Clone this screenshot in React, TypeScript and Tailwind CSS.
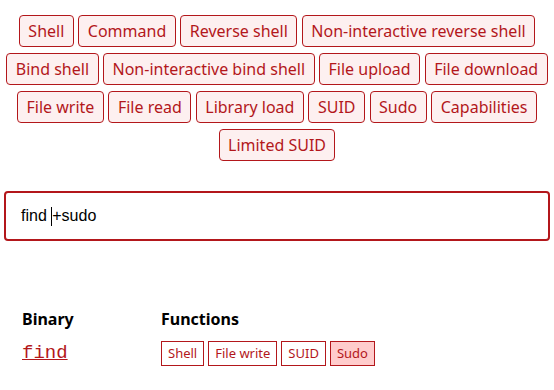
const filters = [
  "Shell",
  "Command",
  "Reverse shell",
  "Non-interactive reverse shell",
  "Bind shell",
  "Non-interactive bind shell",
  "File upload",
  "File download",
  "File write",
  "File read",
  "Library load",
  "SUID",
  "Sudo",
  "Capabilities",
  "Limited SUID",
];

const functions = ["Shell", "File write", "SUID", "Sudo"];

export default function App() {
  return (
    <div className="min-h-[390px] bg-white px-1 pt-[15px] font-['Noto_Sans',sans-serif]">
      {/* Filter chips */}
      <ul className="flex flex-wrap justify-center gap-x-[4.5px] gap-y-1.5">
        {filters.map((f) => (
          <li key={f}>
            <button className="h-8 rounded-[4px] border border-[#b3171b] bg-[#fdf0f0] px-[8.5px] text-base leading-none text-[#b3171b]">
              {f}
            </button>
          </li>
        ))}
      </ul>

      {/* Search */}
      <div className="mt-[30px] flex h-[50px] items-center whitespace-pre rounded-[4px] border-2 border-[#b3171b] px-[15px] font-['Liberation_Sans',sans-serif] text-base text-black">
        <span>find </span>
        <span className="h-[19px] w-px bg-black" />
        <span>+sudo</span>
      </div>

      {/* Results */}
      <table className="mt-[66px] ml-[18px] border-collapse text-left">
        <thead>
          <tr>
            <th className="w-[139px] pb-2 text-base font-bold text-black">Binary</th>
            <th className="pb-2 text-base font-bold text-black">Functions</th>
          </tr>
        </thead>
        <tbody>
          <tr>
            <td className="align-middle">
              <a href="#" className="font-['Liberation_Mono',monospace] text-[19px] text-[#b3171b] underline">
                find
              </a>
            </td>
            <td>
              <ul className="flex gap-1">
                {functions.map((f) => (
                  <li
                    key={f}
                    className={
                      "flex h-[25px] items-center border border-[#b3171b] px-[6px] text-[13px] text-[#b3171b] " +
                      (f === "Sudo" ? "bg-[#ffcccc]" : "bg-white")
                    }
                  >
                    {f}
                  </li>
                ))}
              </ul>
            </td>
          </tr>
        </tbody>
      </table>
    </div>
  );
}
